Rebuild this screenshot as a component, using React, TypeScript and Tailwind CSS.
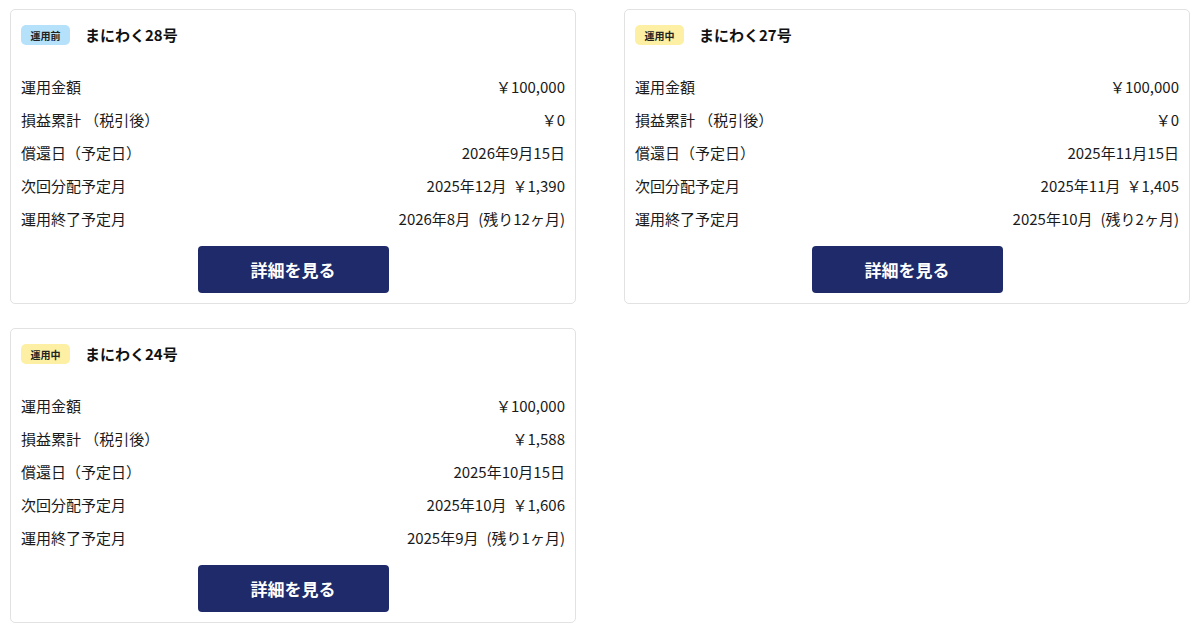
import React from "react";

type Row = [string, string, string?];
type Card = {
  status: "運用前" | "運用中";
  name: string;
  rows: Row[];
};

const cards: Card[] = [
  {
    status: "運用前",
    name: "まにわく28号",
    rows: [
      ["運用金額", "￥100,000"],
      ["損益累計 （税引後）", "￥0"],
      ["償還日（予定日）", "2026年9月15日"],
      ["次回分配予定月", "2025年12月", "￥1,390"],
      ["運用終了予定月", "2026年8月", "(残り12ヶ月)"],
    ],
  },
  {
    status: "運用中",
    name: "まにわく27号",
    rows: [
      ["運用金額", "￥100,000"],
      ["損益累計 （税引後）", "￥0"],
      ["償還日（予定日）", "2025年11月15日"],
      ["次回分配予定月", "2025年11月", "￥1,405"],
      ["運用終了予定月", "2025年10月", "(残り2ヶ月)"],
    ],
  },
  {
    status: "運用中",
    name: "まにわく24号",
    rows: [
      ["運用金額", "￥100,000"],
      ["損益累計 （税引後）", "￥1,588"],
      ["償還日（予定日）", "2025年10月15日"],
      ["次回分配予定月", "2025年10月", "￥1,606"],
      ["運用終了予定月", "2025年9月", "(残り1ヶ月)"],
    ],
  },
];

function FundCard({ card }: { card: Card }) {
  const badge = card.status === "運用前" ? "bg-[#b5e1fa]" : "bg-[#fdefa3]";
  return (
    <div className="border border-[#e2e2e2] rounded-[5px] bg-white px-[10px] pt-[15px] pb-[10px]">
      <div className="flex items-center h-[20px]">
        <span
          className={`${badge} inline-flex items-center justify-center w-[49px] h-[20px] rounded-[5px] text-[10px] font-bold text-[#222]`}
        >
          {card.status}
        </span>
        <span className="ml-[15px] text-[15px] font-bold text-[#111]">{card.name}</span>
      </div>
      <div className="mt-[26px]">
        {card.rows.map(([k, v, extra]) => (
          <div key={k} className="flex items-center justify-between h-[33px] text-[15px] text-[#1a1a1a]">
            <span>{k}</span>
            <span className="flex items-center">
              <span>{v}</span>
              {extra ? (
                <span className={extra.startsWith("(") ? "ml-[8px]" : "ml-[6px]"}>{extra}</span>
              ) : null}
            </span>
          </div>
        ))}
      </div>
      <div className="flex justify-center mt-[10px]">
        <button className="w-[191px] h-[47px] rounded-[4px] bg-[#1e2a69] text-white text-[17px] font-bold">
          詳細を見る
        </button>
      </div>
    </div>
  );
}

export default function App() {
  return (
    <div
      className="w-[1200px] h-[633px] bg-white pl-[10px] pr-[10px] pt-[9px]"
      style={{ fontFamily: '"Noto Sans CJK JP", "Noto Sans", sans-serif' }}
    >
      <div className="grid grid-cols-2 gap-x-[48px] gap-y-[24px]">
        {cards.map((c) => (
          <FundCard key={c.name} card={c} />
        ))}
      </div>
    </div>
  );
}
